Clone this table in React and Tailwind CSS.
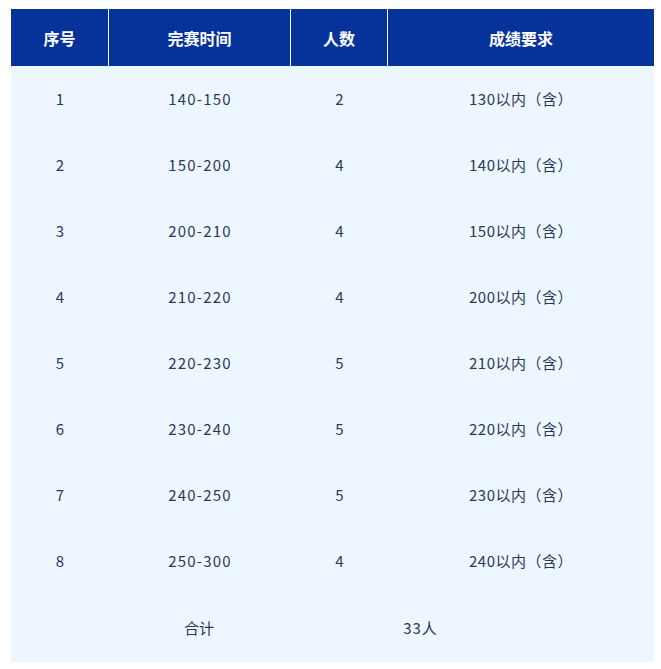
import React from "react";

const rows = [
  ["1", "140-150", "2", "130以内（含）"],
  ["2", "150-200", "4", "140以内（含）"],
  ["3", "200-210", "4", "150以内（含）"],
  ["4", "210-220", "4", "200以内（含）"],
  ["5", "220-230", "5", "210以内（含）"],
  ["6", "230-240", "5", "220以内（含）"],
  ["7", "240-250", "5", "230以内（含）"],
  ["8", "250-300", "4", "240以内（含）"],
];

export default function App() {
  return (
    <div
      className="w-[661px] h-[669px] bg-white pt-[9px] pl-[11px]"
      style={{ fontFamily: '"Noto Sans CJK SC", "Noto Sans", sans-serif' }}
    >
      <div className="w-[643px]">
        <div className="flex h-[57px] bg-[#063399] text-white font-bold text-[16px]">
          <div className="w-[98px] flex items-center justify-center border-r border-white">序号</div>
          <div className="w-[182px] flex items-center justify-center border-r border-white">完赛时间</div>
          <div className="w-[97px] flex items-center justify-center border-r border-white">人数</div>
          <div className="flex-1 flex items-center justify-center">成绩要求</div>
        </div>
        <div className="bg-[#eef7ff] text-[#28395a] text-[15px]">
          {rows.map((r, i) => (
            <div key={i} className="flex h-[66px] items-center">
              <div className="w-[98px] text-center">{r[0]}</div>
              <div className="w-[182px] text-center tracking-[1.2px]">{r[1]}</div>
              <div className="w-[97px] text-center">{r[2]}</div>
              <div className="flex-1 text-center tracking-[0.5px]">{r[3]}</div>
            </div>
          ))}
          <div className="flex h-[68px] items-center">
            <div className="w-[376px] text-center">合计</div>
            <div className="w-[64px] text-center pl-[3px] tracking-[1px]">33人</div>
          </div>
        </div>
      </div>
    </div>
  );
}
